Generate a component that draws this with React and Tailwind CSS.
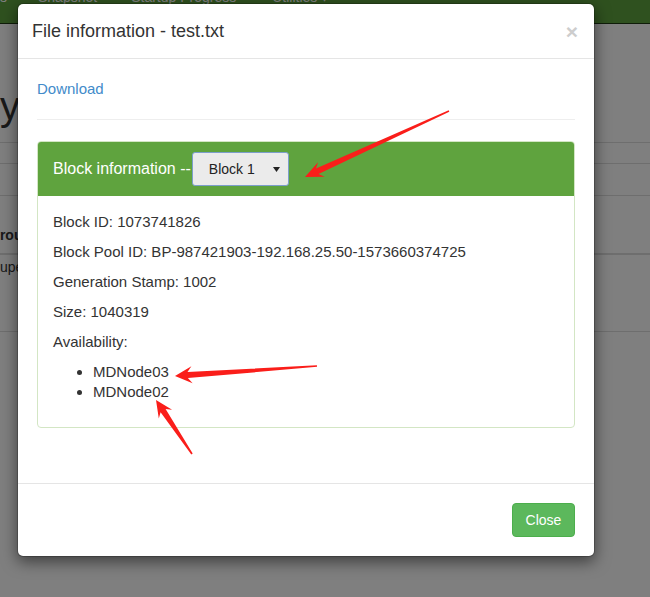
const arrowPoints = (tx, ty, hx, hy, sw, hl, hw) => {
  const len = Math.hypot(hx - tx, hy - ty)
  const dx = (hx - tx) / len
  const dy = (hy - ty) / len
  const nx = -dy
  const ny = dx
  const jx = hx - dx * hl * 0.75
  const jy = hy - dy * hl * 0.75
  const bx = hx - dx * hl
  const by = hy - dy * hl
  const pts = [
    [tx + nx * 0.8, ty + ny * 0.8],
    [jx + (nx * sw) / 2, jy + (ny * sw) / 2],
    [bx + nx * hw, by + ny * hw],
    [hx, hy],
    [bx - nx * hw, by - ny * hw],
    [jx - (nx * sw) / 2, jy - (ny * sw) / 2],
    [tx - nx * 0.8, ty - ny * 0.8],
  ]
  return pts.map((p) => p.map((v) => v.toFixed(1)).join(',')).join(' ')
}

const arrows = [
  [449, 111, 305, 177, 6, 18, 8],
  [317, 366, 175, 376, 6, 17, 8.5],
  [192, 454, 156, 400, 6, 17, 8],
]

const App = () => {
  return (
    <div className="relative h-[597px] w-[650px] overflow-hidden bg-white font-['Liberation_Sans',Arial,sans-serif] text-[#333]">
      {/* page behind the dialog */}
      <div className="flex h-[24px] items-start overflow-hidden border-b border-[#1f3a12] bg-[#5fa33e]">
        <div className="-mt-[13px] flex text-[14px] leading-5 text-white">
          <span>s</span>
          <span className="ml-[31px]">Snapshot</span>
          <span className="ml-[34px]">Startup Progress</span>
          <span className="ml-[36px]">Utilities ▾</span>
        </div>
      </div>
      <div className="mt-[62px] h-[40px] text-[40px] leading-none">y</div>
      <div className="mt-[16px] h-[21px] border-t border-[#ddd]" />
      <div className="h-[32px] border-t border-[#ddd]" />
      <div className="flex h-[60px] items-end border-t border-b-2 border-[#ddd] pb-[8px] text-[14px] leading-5 font-bold">
        <span className="-ml-[11px]">Group</span>
      </div>
      <div className="h-[77px] border-b border-[#ddd] pt-[2px] text-[14px] leading-5">
        <span className="-ml-[7px] block">supergroup</span>
      </div>

      <div className="absolute inset-0 bg-black/50" />

      {/* dialog */}
      <div className="absolute left-[17px] top-[3px] w-[578px] rounded-[6px] border border-black/20 bg-white bg-clip-padding shadow-[0_5px_15px_rgba(0,0,0,0.5)]">
        <div className="flex items-center justify-between border-b border-[#e5e5e5] px-[14px] py-[14px]">
          <h4 className="text-[18px] leading-[26px]">File information - test.txt</h4>
          <span className="mr-[2px] text-[21px] leading-none font-bold text-[#cdcdcd]">×</span>
        </div>

        <div className="px-[19px] pt-5 pb-5">
          <a className="block text-[15px] leading-5 text-[#428bca]">Download</a>
          <hr className="mt-5 mb-[21px] border-t border-[#eee]" />

          <div className="mb-[35px] rounded-[4px] border border-[#d3e6c4]">
            <div className="flex items-center rounded-t-[3px] bg-[#5fa33e] px-[15px] py-[10px]">
              <span className="text-[16px] leading-5 text-white">Block information --</span>
              <div className="ml-[1px] flex h-[34px] w-[97px] items-center rounded-[3px] border border-[#7c9ecb] bg-[#ebebeb] pl-[16px] text-[14px] text-[#222]">
                <span>Block 1</span>
                <svg className="mr-[8px] ml-auto" width="7" height="5" viewBox="0 0 7 5">
                  <path d="M0 0h7L3.5 5z" fill="#222" />
                </svg>
              </div>
            </div>
            <div className="px-[15px] pt-[16px] pb-[15px] text-[15px] leading-5">
              <p className="mb-[10px]">Block ID: 1073741826</p>
              <p className="mb-[10px]">Block Pool ID: BP-987421903-192.168.25.50-1573660374725</p>
              <p className="mb-[10px]">Generation Stamp: 1002</p>
              <p className="mb-[10px]">Size: 1040319</p>
              <p className="mb-[10px]">Availability:</p>
              <ul className="mb-[10px] list-disc pl-[40px]">
                <li>MDNode03</li>
                <li>MDNode02</li>
              </ul>
            </div>
          </div>
        </div>

        <div className="flex justify-end border-t border-[#e5e5e5] px-[19px] py-[19px]">
          <button
            type="button"
            className="h-[34px] w-[63px] rounded-[4px] border border-[#4cae4c] bg-[#5cb85c] text-[14px] text-white"
          >
            Close
          </button>
        </div>
      </div>

      {/* annotation arrows */}
      <svg className="pointer-events-none absolute inset-0" width="650" height="597" viewBox="0 0 650 597">
        {arrows.map((a, i) => (
          <polygon key={i} points={arrowPoints(...a)} fill="#fa1e1a" />
        ))}
      </svg>
    </div>
  )
}

export default App
